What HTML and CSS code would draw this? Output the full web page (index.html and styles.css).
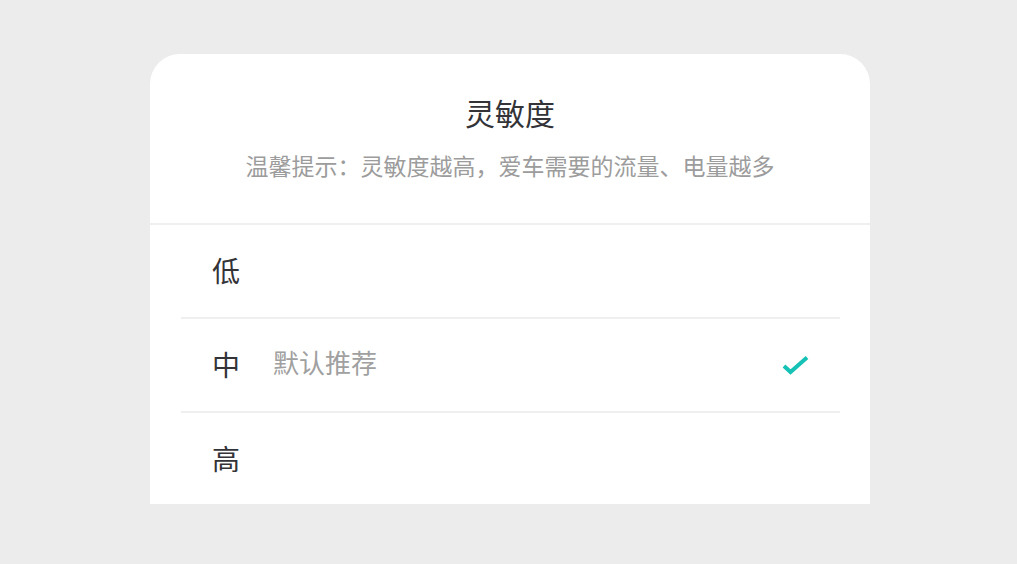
FILE: index.html
```html
<!DOCTYPE html>
<html lang="zh-CN">
<head>
<meta charset="utf-8">
<title>灵敏度</title>
<link rel="stylesheet" href="styles.css">
</head>
<body>
<div class="page">
  <div class="card">
    <div class="header">
      <div class="title">灵敏度</div>
      <div class="subtitle">温馨提示：灵敏度越高，爱车需要的流量、电量越多</div>
    </div>
    <div class="list">
      <div class="row">
        <span class="label">低</span>
      </div>
      <div class="row">
        <span class="label">中</span>
        <span class="hint">默认推荐</span>
        <svg class="check" width="30" height="22" viewBox="0 0 30 22">
          <polyline points="3,12 9.5,18 26,3.5" fill="none" stroke="#15c2b5" stroke-width="4" stroke-linejoin="miter"/>
        </svg>
      </div>
      <div class="row">
        <span class="label">高</span>
      </div>
    </div>
  </div>
</div>
</body>
</html>
```

FILE: styles.css
```css
html, body {
  margin: 0;
  padding: 0;
  background: #ececec;
  font-family: "Noto Sans CJK SC", "Noto Sans", sans-serif;
}

.page {
  width: 1017px;
  height: 564px;
  display: flex;
  justify-content: flex-start;
  padding: 54px 0 0 150px;
  box-sizing: border-box;
}

.card {
  width: 720px;
  height: 450px;
  background: #ffffff;
  border-radius: 30px 30px 0 0;
  display: flex;
  flex-direction: column;
}

.header {
  padding: 38px 0 0;
  height: 171px;
  box-sizing: border-box;
  border-bottom: 2px solid #efefef;
  text-align: center;
}

.title {
  font-size: 30px;
  line-height: 40px;
  color: #333338;
}

.subtitle {
  margin-top: 18px;
  font-size: 23px;
  line-height: 30px;
  color: #9c9c9c;
}

.list {
  padding: 0 30px 0 31px;
  display: flex;
  flex-direction: column;
  flex: 1;
}

.row {
  height: 92px;
  display: flex;
  align-items: center;
  padding: 0 30px 0 31px;
  border-bottom: 2px solid #efefef;
}

.row:last-child {
  border-bottom: none;
  height: auto;
  flex: 1;
}

.label {
  font-size: 28px;
  color: #333338;
  width: 28px;
  padding-bottom: 2px;
}

.hint {
  margin-left: 33px;
  font-size: 26px;
  color: #a0a0a0;
  padding-bottom: 8px;
}

.check {
  margin-left: auto;
  margin-right: -1px;
}
```
